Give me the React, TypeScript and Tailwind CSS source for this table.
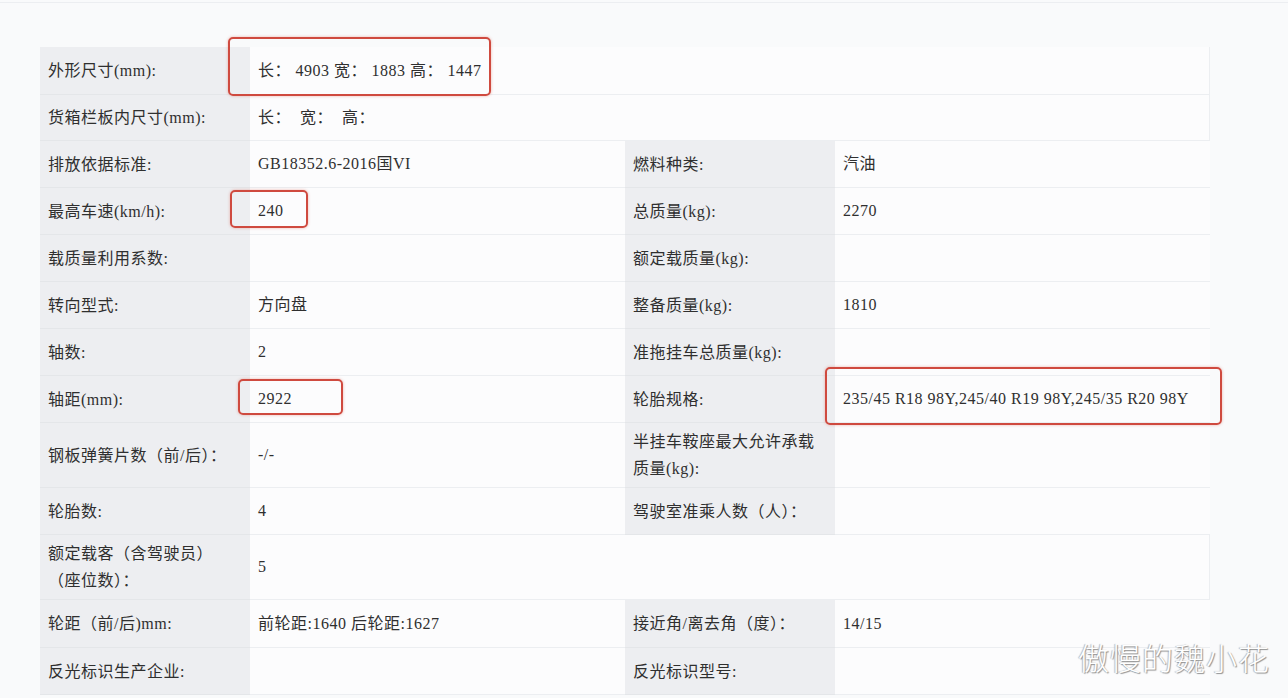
import React from "react";

type Row = {
  h: string;
  label: string;
  value: string;
  label2?: string;
  value2?: string;
  wide?: boolean;
};

const rows: Row[] = [
  { h: "h-[48px]", label: "外形尺寸(mm):", value: "长： 4903 宽： 1883 高： 1447", wide: true },
  { h: "h-[46px]", label: "货箱栏板内尺寸(mm):", value: "长：  宽：  高：", wide: true },
  { h: "h-[47px]", label: "排放依据标准:", value: "GB18352.6-2016国VI", label2: "燃料种类:", value2: "汽油" },
  { h: "h-[47px]", label: "最高车速(km/h):", value: "240", label2: "总质量(kg):", value2: "2270" },
  { h: "h-[47px]", label: "载质量利用系数:", value: "", label2: "额定载质量(kg):", value2: "" },
  { h: "h-[47px]", label: "转向型式:", value: "方向盘", label2: "整备质量(kg):", value2: "1810" },
  { h: "h-[47px]", label: "轴数:", value: "2", label2: "准拖挂车总质量(kg):", value2: "" },
  {
    h: "h-[47px]",
    label: "轴距(mm):",
    value: "2922",
    label2: "轮胎规格:",
    value2: "235/45 R18 98Y,245/40 R19 98Y,245/35 R20 98Y",
  },
  {
    h: "h-[65px]",
    label: "钢板弹簧片数（前/后）：",
    value: "-/-",
    label2: "半挂车鞍座最大允许承载\n质量(kg):",
    value2: "",
  },
  { h: "h-[47px]", label: "轮胎数:", value: "4", label2: "驾驶室准乘人数（人）：", value2: "" },
  { h: "h-[65px]", label: "额定载客（含驾驶员）\n（座位数）：", value: "5", wide: true },
  {
    h: "h-[48px]",
    label: "轮距（前/后)mm:",
    value: "前轮距:1640 后轮距:1627",
    label2: "接近角/离去角（度）：",
    value2: "14/15",
  },
  { h: "h-[47px]", label: "反光标识生产企业:", value: "", label2: "反光标识型号:", value2: "" },
];

const Label = ({ text }: { text: string }) => (
  <div className="w-[210px] shrink-0 bg-[#edeef1] border-b border-[#e4e6e9] px-2 flex items-center leading-[27px] whitespace-pre-line">
    <span>{text}</span>
  </div>
);

const Value = ({ text, wide }: { text: string; wide?: boolean }) => (
  <div
    className={
      wide
        ? "flex-1 bg-[#fcfcfd] border-b border-[#eceef1] px-2 flex items-center whitespace-pre"
        : "w-[375px] shrink-0 bg-[#fcfcfd] border-b border-[#eceef1] px-2 flex items-center whitespace-pre"
    }
  >
    {text}
  </div>
);

const RedBox = ({ cls }: { cls: string }) => (
  <div
    className={
      "absolute border-2 border-[#cf4a3f] rounded-[5px] shadow-[0_0_3px_rgba(220,90,70,0.45)] " + cls
    }
  />
);

export default function App() {
  return (
    <div
      className="relative w-[1288px] h-[698px] overflow-hidden bg-[#f9fafb] text-[#2f2f2f] text-[16px] tracking-[0.5px]"
      style={{ fontFamily: '"Liberation Serif", "Noto Sans CJK SC", serif' }}
    >
      <div className="h-[3px] border-b border-[#eceef1]" />
      <div className="pt-[44px] pl-[40px]">
        <div className="w-[1170px] flex flex-col border-r border-[#eceef1]">
          {rows.map((r, i) => (
            <div key={i} className={"flex " + r.h}>
              <Label text={r.label} />
              {r.wide ? (
                <Value text={r.value} wide />
              ) : (
                <>
                  <Value text={r.value} />
                  <Label text={r.label2 || ""} />
                  <Value text={r.value2 || ""} />
                </>
              )}
            </div>
          ))}
        </div>
      </div>

      <RedBox cls="left-[228px] top-[37px] w-[263px] h-[59px]" />
      <RedBox cls="left-[230px] top-[190px] w-[78px] h-[38px]" />
      <RedBox cls="left-[238px] top-[379px] w-[105px] h-[36px]" />
      <RedBox cls="left-[825px] top-[367px] w-[397px] h-[58px]" />

      <div
        className="absolute right-[18px] bottom-[18px] text-[31px] font-light tracking-[1px] text-white [text-shadow:1px_1px_1px_#8f8f8f,-1px_0_1px_#b5b5b5]"
        style={{ fontFamily: '"Noto Sans CJK SC", sans-serif' }}
      >
        傲慢的魏小花
      </div>
    </div>
  );
}
